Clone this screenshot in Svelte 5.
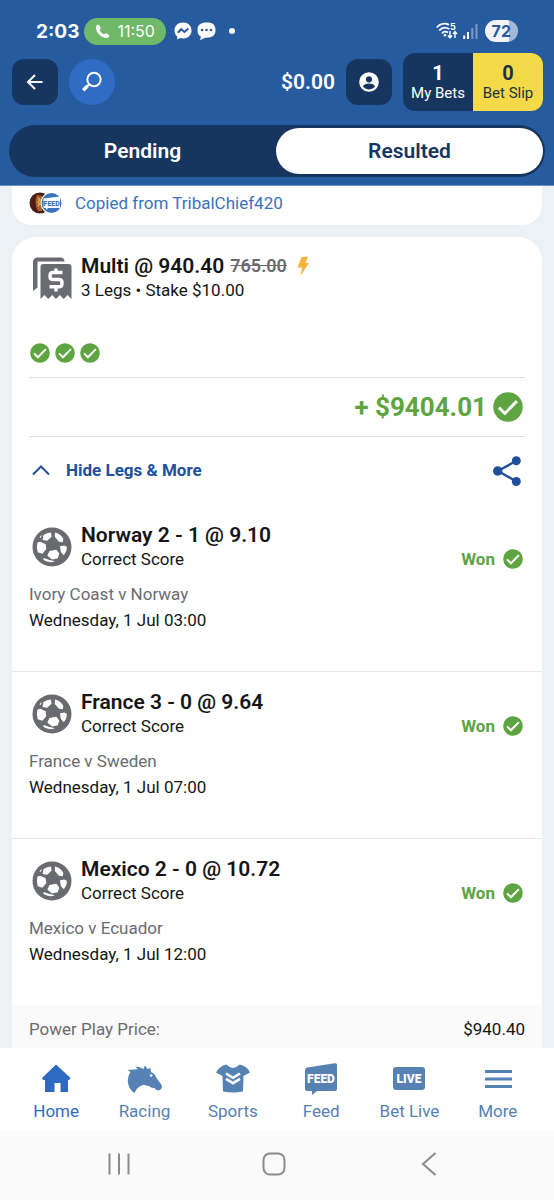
<script>
  let tab = $state("Resulted");
  let open = $state(true);

  const tabs = ["Pending", "Resulted"];

  const legs = [
    {
      pick: "Norway 2 - 1 @ 9.10",
      market: "Correct Score",
      match: "Ivory Coast v Norway",
      date: "Wednesday, 1 Jul 03:00",
    },
    {
      pick: "France 3 - 0 @ 9.64",
      market: "Correct Score",
      match: "France v Sweden",
      date: "Wednesday, 1 Jul 07:00",
    },
    {
      pick: "Mexico 2 - 0 @ 10.72",
      market: "Correct Score",
      match: "Mexico v Ecuador",
      date: "Wednesday, 1 Jul 12:00",
    },
  ];

  const links = ["Home", "Racing", "Sports", "Feed", "Bet Live", "More"];
</script>

{#snippet check(size)}
  <svg width={size} height={size} viewBox="0 0 20 20" aria-hidden="true">
    <circle cx="10" cy="10" r="9.8" fill="#5ea441" />
    <path d="M4 10.400l3.900 3.900 8-8.200" fill="none" stroke="#fff" stroke-width="2" />
  </svg>
{/snippet}

<div class="app">
  <header>
    <div class="status">
      <span class="clock">2:03</span>
      <span class="call">
        <svg width="15" height="15" viewBox="0 0 15 15">
          <path
            d="M1 2.200C1.300 1 3.400.300 4.100 1.100l1.600 2.700c.3.700-.9 1.700-1 2.200.5 1.600 2.400 3.600 4.200 4.200.6.100 1.500-1.300 2.200-1l2.700 1.600c.9.700.1 2.700-1 3C7 15-.2 7.800 1 2.200z"
            fill="#fff"
          />
        </svg>
        11:50
      </span>
      <svg class="bubble" width="18" height="18" viewBox="0 0 18 18">
        <path
          d="M9 .5C4 .5.5 4 .5 8.500c0 2.500 1 4.500 2.700 6v3l2.800-1.500c1 .3 2 .4 3 .4 5 0 8.500-3.500 8.500-8S14 .5 9 .5z"
          fill="#fff"
        />
        <path d="M3.800 10.800l3.400-3.600 3.300 2.700 3.800-3.300" fill="none" stroke="#275b9f" stroke-width="2" />
      </svg>
      <svg class="bubble" width="19" height="19" viewBox="0 0 19 19">
        <path
          d="M9.500.5C4 .5.500 2.500.500 8c0 3.500 1.200 5.600 3.500 6.700l-1 3.500 5-2.500h1.500c5.500 0 9-2 9-7.700S15 .5 9.500.5z"
          fill="#fff"
        />
        <circle cx="5" cy="8" r="1.300" fill="#275b9f" />
        <circle cx="9.500" cy="8" r="1.300" fill="#275b9f" />
        <circle cx="14" cy="8" r="1.300" fill="#275b9f" />
      </svg>
      <span class="dot"></span>
      <svg class="wifi" width="22" height="18" viewBox="0 0 22 18">
        <g fill="none" stroke="#fff" stroke-width="1.800">
          <path d="M.8 5.500C4 1.600 9 .9 13 2.800" />
          <path d="M3.300 8.500c2.500-3 6.500-3.500 10-1.500" />
          <path d="M6 11.300c1.500-1.800 4-2 6-.7" />
        </g>
        <circle cx="9" cy="13.200" r="1.300" fill="#fff" />
        <text x="14" y="7.500" class="five">5</text>
        <path d="M14 9v7M12 13.500l2 2.500 2-2.500M19 16V9.500M17 12l2-2.500 2 2.500" fill="none" stroke="#fff" stroke-width="1.400" />
      </svg>
      <svg width="15" height="16" viewBox="0 0 15 16">
        <path d="M1.200 12.500V16M5 9v7" stroke="#fff" stroke-width="2" />
        <path d="M9.300 5v11M13.500 1v15" stroke="#7d9dc7" stroke-width="2" />
      </svg>
      <span class="battery">72</span>
    </div>

    <div class="bar">
      <button class="back" aria-label="Back">
        <svg width="20" height="20" viewBox="0 0 20 20">
          <path d="M17.500 10H3.500M10 3L3 10l7 7" fill="none" stroke="#fff" stroke-width="2" />
        </svg>
      </button>
      <button class="search" aria-label="Search">
        <svg width="22" height="22" viewBox="0 0 22 22">
          <circle cx="13" cy="8.500" r="6.700" fill="none" stroke="#fff" stroke-width="2" />
          <path d="M8 13.500l-3 3" stroke="#fff" stroke-width="2" />
          <path d="M6.500 15l-4.300 4.300" stroke="#fff" stroke-width="3.400" />
        </svg>
      </button>
      <span class="balance">$0.00</span>
      <button class="back" aria-label="Account">
        <svg width="22" height="22" viewBox="0 0 22 22">
          <circle cx="11" cy="11" r="9.800" fill="#fff" />
          <circle cx="11" cy="8.300" r="3.100" fill="#17365f" />
          <path d="M4.800 15.200c1.400-2 4-2.700 6.200-2.700s4.800.7 6.200 2.700c-1.400 2-3.700 3.200-6.200 3.200s-4.800-1.200-6.200-3.200z" fill="#17365f" />
        </svg>
      </button>
      <div class="bets">
        <button><b>1</b>My Bets</button>
        <button class="slip"><b>0</b>Bet Slip</button>
      </div>
    </div>

    <div class="tabs">
      {#each tabs as name}
        <button class:active={tab == name} onclick={() => (tab = name)}>{name}</button>
      {/each}
    </div>
  </header>

  <main>
    <section class="card copied">
      <svg width="34" height="22" viewBox="0 0 34 22">
        <circle cx="11" cy="11" r="10.500" fill="#4a1d18" />
        <path d="M8 3c-2 4-2 11 1 16h4V4z" fill="#a8622b" />
        <path d="M9 6l2 2-2 2 2 2-2 2" fill="none" stroke="#e0b23c" stroke-width="1.300" />
        <circle cx="22.500" cy="11" r="11" fill="#fff" />
        <circle cx="22.500" cy="11" r="10" fill="#3a72bd" />
        <path d="M14.500 6.500l16.500-2v11.500H19l-2 2v-2h-2.500z" fill="#fff" />
        <text x="22.700" y="13.500" class="feed-small">FEED</text>
      </svg>
      <a href="#profile">Copied from TribalChief420</a>
    </section>

    <section class="card">
      <div class="head">
        <svg class="icon" width="42" height="44" viewBox="0 0 42 44">
          <path d="M2 35V6.500C2 3.500 3.500 1.500 6.500 1.500h23c2.500 0 4 1.500 4 4H6.500v26z" fill="#6a6b70" />
          <path d="M9.500 43V11c0-2 1-3 3-3h25c2 0 3 1 3 3v32l-3.900-4-3.900 4-3.800-4-3.900 4-3.900-4-3.800 4-3.900-4z" fill="#6a6b70" />
          <path d="M31.500 16.500H22c-2 0-3 1-3 3v1c0 2 1 3 3 3h6c2 0 3 1 3 3v1.300c0 2-1 3-3 3h-9.500M25 12.500v4.500M25 31v4.500" fill="none" stroke="#fff" stroke-width="3.400" />
        </svg>
        <div>
          <h2>
            Multi @ 940.40 <s>765.00</s>
            <svg class="bolt" width="12" height="20" viewBox="0 0 12 20">
              <path d="M4.500 1L11 .5 8.500 7H12L3.500 20l1.700-8.500H.5z" fill="#f3b53b" />
            </svg>
          </h2>
          <p>3 Legs • Stake $10.00</p>
        </div>
      </div>

      <div class="ticks">
        {#each legs as leg}
          {@render check(20)}
        {/each}
      </div>

      <div class="payout">
        <span>+ $9404.01</span>
        {@render check(30)}
      </div>

      <div class="actions">
        <button class="toggle" aria-expanded={open} onclick={() => (open = !open)}>
          <svg class:closed={!open} width="18" height="12" viewBox="0 0 18 12">
            <path d="M1 10.500l8-8 8 8" fill="none" stroke="#20509b" stroke-width="2" />
          </svg>
          {open ? "Hide" : "Show"} Legs & More
        </button>
        <button aria-label="Share">
          <svg width="30" height="30" viewBox="0 0 30 30">
            <path d="M24.500 4.700L6 15l18.500 10.500" fill="none" stroke="#20509b" stroke-width="2.400" />
            <g fill="#20509b">
              <circle cx="24.300" cy="4.700" r="4.500" />
              <circle cx="5.700" cy="15" r="4.700" />
              <circle cx="24.300" cy="25.500" r="4.500" />
            </g>
          </svg>
        </button>
      </div>

      {#if open}
        {#each legs as leg}
          <article>
            <div class="head">
              <svg class="icon" width="42" height="40" viewBox="-1 0 42 40">
                <circle cx="20" cy="20" r="19.500" fill="#6a6b70" />
                <g fill="#fff">
                  <path d="M11.500 8Q15 5.500 19 5.500l.5 4.300-4.300 4-4.700-.8z" />
                  <path d="M23 5.500q5.500 1.200 8.300 6.300l-.5 3.500-3.800-.5-4.200-4.800z" />
                  <path d="M5.500 15.500l2.700-.8 5.500 2.500.5 5-3.800 4.500-4.700-1.500q-1.700-4.800-.2-9.700z" />
                  <path d="M17.500 24l6.800-1.300 3 3.700-1.500 4.800-5.800 1.300-4.700-4z" />
                  <path d="M28 19.300l4.300-.8 2.500 1.300q.2 5-3 8.400l-3-3.200z" />
                  <path d="M11.500 31q5 2 11.500 3.300-6 2.200-11.500-1.300z" />
                  <path d="M7.500 10.500q1-1.800 2.300-2.500l-.8 2.800z" />
                </g>
              </svg>
              <div>
                <h2>{leg.pick}</h2>
                <p>{leg.market}</p>
              </div>
              <span class="won">Won {@render check(20)}</span>
            </div>
            <p class="match">{leg.match}</p>
            <p class="date">{leg.date}</p>
          </article>
        {/each}
      {/if}

      <div class="price">
        <span>Power Play Price:</span>
        <b>$940.40</b>
      </div>
    </section>
  </main>

  <nav>
    {#each links as name, i}
      <a href="#{name}" class:current={i == 0}>
        <svg width="36" height="34" viewBox="0 0 36 34" fill="currentColor">
          {#if name == "Home"}
            <path d="M18 3.500L32.500 17l-1.500 2h-1v12h-7.500v-9h-6v9H7V19H5l-1-2z" />
          {:else if name == "Racing"}
            <path
              d="M1.500 8.700q5 .3 10.300-.4L9.200 5.500q5 0 8.300 2.500l1.300-3.500 2.700 3.500 3-1 .5 4q4 1.500 5.500 6l5.300 7.300q.7 4-3 5-2.500.5-4.300-2.300-3.500.3-5.500-2-3-.5-5.500-1.300-6.500 1.800-9 8.300Q1.500 27 1.800 18.700 2 14 4.500 11z"
            />
            <circle cx="25.200" cy="14.500" r="1.300" fill="#fff" />
          {:else if name == "Sports"}
            <path d="M11.500 3.500q6.500 7 13 0c5 1 8.500 3.500 10.500 8l-6.500 3.500-.5 15.500q-10 2-20 0L7.500 15 1 11.500C3 7.500 6.500 4.500 11.500 3.500z" />
            <path d="M11 12.500l7 4.300 7-4.300M11 17.800l7 4.300 7-4.300" fill="none" stroke="#fff" stroke-width="2.600" />
          {:else if name == "Feed"}
            <path d="M2 9q0-2 2-2.500L32 2.200q2-.3 2 1.500V28q0 2-2 2H14l-5 4v-4H4q-2 0-2-2z" />
            <text x="18" y="22" class="badge">FEED</text>
          {:else if name == "Bet Live"}
            <rect x="2" y="6" width="32" height="23" rx="3" />
            <text x="18" y="22" class="badge">LIVE</text>
          {:else}
            <path d="M5 9h27v3H5zM5 16.500h27v3H5zM5 24h27v3H5z" />
          {/if}
        </svg>
        {name}
      </a>
    {/each}
  </nav>

  <footer>
    <button aria-label="Recents">
      <svg width="24" height="24" viewBox="0 0 24 24">
        <path d="M2.500 1.500v21M12 1.500v21M21.500 1.500v21" />
      </svg>
    </button>
    <button aria-label="Home screen">
      <svg width="24" height="24" viewBox="0 0 24 24">
        <rect x="1.500" y="1.500" width="21" height="21" rx="6.500" />
      </svg>
    </button>
    <button aria-label="Previous">
      <svg width="24" height="24" viewBox="0 0 24 24">
        <path d="M18.500 1L6 12l12.500 11" />
      </svg>
    </button>
  </footer>
</div>

<style>
  :global(body) {
    margin: 0;
    font-family: Roboto, "Liberation Sans", sans-serif;
    font-size: 17px;
    color: #151515;
    background: #ecf1f6;
  }

  .app {
    display: flex;
    flex-direction: column;
    height: 100vh;
  }

  svg {
    display: block;
    flex: none;
  }

  button {
    padding: 0;
    border: 0;
    background: none;
    font: inherit;
    color: inherit;
    cursor: pointer;
  }

  a {
    color: #3a72bd;
    text-decoration: none;
  }

  h2,
  p {
    margin: 0;
    font-size: 17px;
    line-height: 24px;
  }

  h2 {
    display: flex;
    align-items: center;
    gap: 6px;
    font-size: 21px;
    font-weight: 600;
  }

  header {
    padding: 17px 9px 8px;
    border-bottom: 1px solid #6d90c0;
    background: #275b9f;
    color: #fff;
  }

  .status {
    display: flex;
    align-items: center;
    height: 28px;
    padding: 0 27px;
    font-family: Inter, sans-serif;
  }

  .clock {
    font-size: 19px;
    font-weight: 700;
  }

  .call {
    display: flex;
    align-items: center;
    gap: 7px;
    height: 27px;
    margin: 0 8px 0 5px;
    padding: 0 11px;
    border-radius: 14px;
    background: #6fb968;
    font-size: 16px;
  }

  .bubble {
    margin-right: 5px;
  }

  .dot {
    width: 6px;
    height: 6px;
    margin-left: 8px;
    border-radius: 50%;
    background: #fff;
  }

  .wifi {
    margin: 0 5px 0 auto;
  }

  .five {
    font: 700 9px Inter, sans-serif;
    fill: #fff;
  }

  .battery {
    margin-left: 7px;
    padding: 0 7px;
    border-radius: 11px;
    background: linear-gradient(90deg, #f1f4fa 72%, #a3b9d9 72%);
    color: #275b9f;
    font-size: 16px;
    font-weight: 700;
    line-height: 22px;
  }

  .bar {
    display: flex;
    align-items: center;
    gap: 11px;
    margin: 8px 2px 14px 3px;
  }

  .back,
  .search {
    display: grid;
    place-items: center;
    width: 46px;
    height: 46px;
    border-radius: 12px;
    background: #17365f;
  }

  .search {
    border-radius: 50%;
    background: #2f6cc4;
  }

  .balance {
    margin-left: auto;
    font-size: 21px;
    font-weight: 600;
  }

  .bets {
    display: flex;
    height: 58px;
    border-radius: 12px;
    overflow: hidden;
    background: #17365f;
  }

  .bets button {
    width: 70px;
    padding-top: 2px;
    font-size: 15px;
    line-height: 20px;
  }

  .bets b {
    display: block;
    font-size: 20px;
  }

  .bets .slip {
    background: #f4da48;
    color: #1d3344;
  }

  .tabs {
    display: flex;
    padding: 3px 2px 3px 0;
    border-radius: 26px;
    background: #17365f;
  }

  .tabs button {
    flex: 1;
    height: 46px;
    border-radius: 23px;
    font-size: 21px;
    font-weight: 600;
  }

  .tabs .active {
    background: #fff;
    color: #17365f;
  }

  main {
    flex: 1;
    min-height: 0;
    padding: 0 12px;
    overflow: hidden;
  }

  .card {
    border-radius: 24px;
    overflow: hidden;
    background: #fff;
  }

  .copied {
    display: flex;
    align-items: center;
    gap: 12px;
    margin-bottom: 12px;
    padding: 6px 17px 11px;
    border-radius: 0 0 20px 20px;
  }

  .head {
    display: flex;
    align-items: center;
    gap: 8px;
    padding: 17px 19px 0;
  }

  s {
    color: #6a6b70;
    font-size: 18px;
  }

  .bolt {
    margin-left: 4px;
  }

  .ticks {
    display: flex;
    gap: 5px;
    padding: 41px 18px 14px;
  }

  .payout {
    display: flex;
    align-items: center;
    justify-content: flex-end;
    gap: 6px;
    height: 58px;
    margin: 0 17px;
    padding-right: 2px;
    border: solid #d9dfe3;
    border-width: 1px 0;
    color: #5ea441;
    font-size: 26px;
    font-weight: 700;
  }

  .actions {
    display: flex;
    align-items: center;
    justify-content: space-between;
    height: 68px;
    padding: 0 20px;
    color: #20509b;
  }

  .toggle {
    display: flex;
    align-items: center;
    gap: 16px;
    padding-bottom: 3px;
    font-size: 17px;
    font-weight: 700;
  }

  .closed {
    transform: rotate(180deg);
  }

  article {
    padding-bottom: 38px;
    border-bottom: 1px solid #e4e8eb;
  }

  article:last-of-type {
    border-bottom: 0;
  }

  article .head {
    padding-top: 18px;
  }

  .won {
    display: flex;
    align-items: center;
    align-self: flex-end;
    gap: 8px;
    height: 24px;
    margin-left: auto;
    color: #5ea441;
    font-weight: 700;
  }

  .match,
  .date {
    padding: 0 17px;
    line-height: 26px;
  }

  .match {
    padding-top: 10px;
    color: #6a6b70;
  }

  .price {
    display: flex;
    justify-content: space-between;
    padding: 11px 17px 36px;
    background: #fafafa;
    color: #6a6b70;
    line-height: 26px;
  }

  .price b {
    color: #151515;
    font-weight: 400;
  }

  nav {
    display: flex;
    padding: 13px 12px 8px;
    background: #fff;
  }

  nav a {
    display: flex;
    flex: 1;
    flex-direction: column;
    align-items: center;
    gap: 4px;
    color: #5681b3;
    line-height: 24px;
  }

  nav .current {
    color: #2f6ac1;
  }

  .badge,
  .feed-small {
    font: 900 12px Roboto, sans-serif;
    fill: #fff;
    text-anchor: middle;
  }

  .feed-small {
    font-size: 7px;
    fill: #3a72bd;
  }

  footer {
    display: flex;
    padding: 21px 48px 24px 41px;
    background: #fafafa;
  }

  footer button {
    display: grid;
    flex: 1;
    place-items: center;
  }

  footer svg {
    fill: none;
    stroke: #8a8a8a;
    stroke-width: 2;
  }
</style>
